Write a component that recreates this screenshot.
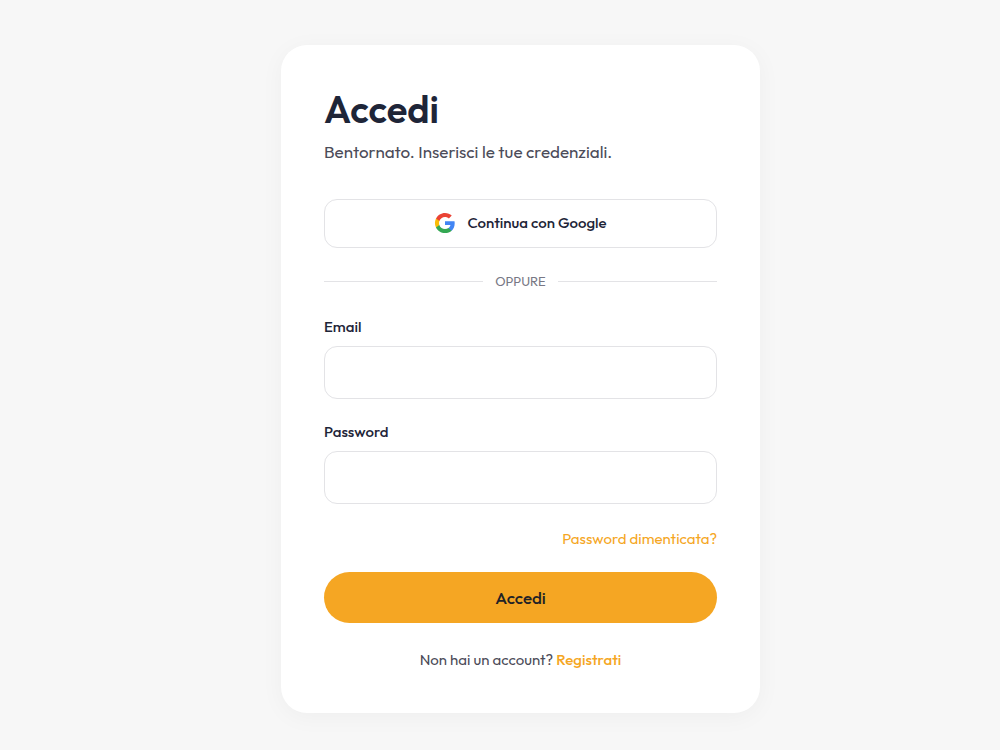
<main>
  <section class="card">
    <header>
      <h1>Accedi</h1>
      <p>Bentornato. Inserisci le tue credenziali.</p>
    </header>

    <button class="google" type="button">
      <svg viewBox="0 0 24 24" width="22" height="22" aria-hidden="true">
        <path fill="#4285F4" d="M22.56 12.25c0-.78-.07-1.53-.2-2.25H12v4.26h5.92c-.26 1.37-1.04 2.53-2.21 3.31v2.77h3.57c2.08-1.92 3.28-4.74 3.28-8.09z" />
        <path fill="#34A853" d="M12 23c2.97 0 5.46-.98 7.28-2.66l-3.57-2.77c-.98.66-2.23 1.06-3.71 1.06-2.86 0-5.29-1.93-6.16-4.53H2.18v2.84C3.99 20.53 7.7 23 12 23z" />
        <path fill="#FBBC05" d="M5.84 14.09c-.22-.66-.35-1.36-.35-2.09s.13-1.43.35-2.09V7.07H2.18C1.43 8.55 1 10.22 1 12s.43 3.45 1.18 4.93l3.66-2.84z" />
        <path fill="#EA4335" d="M12 5.38c1.62 0 3.06.56 4.21 1.64l3.15-3.15C17.45 2.09 14.97 1 12 1 7.7 1 3.99 3.47 2.18 7.07l3.66 2.84c.87-2.6 3.3-4.53 6.16-4.53z" />
      </svg>
      Continua con Google
    </button>

    <div class="divider"><span>OPPURE</span></div>

    <form onsubmit={(event) => event.preventDefault()}>
      <div class="field">
        <label for="email">Email</label>
        <input id="email" type="email" autocomplete="email" />
      </div>
      <div class="field">
        <label for="password">Password</label>
        <input id="password" type="password" autocomplete="current-password" />
      </div>
      <a class="forgot" href="#recupero">Password dimenticata?</a>
      <button class="submit" type="submit">Accedi</button>
    </form>

    <p class="signup">Non hai un account? <a href="#registrati">Registrati</a></p>
  </section>
</main>

<style>
  :global(body) {
    margin: 0;
    background: #f7f7f7;
  }

  main {
    box-sizing: border-box;
    display: flex;
    justify-content: center;
    min-height: 100vh;
    padding: 45px 20px 36px 61px;
    color: #1e2538;
    font-family: Outfit, Lato, sans-serif;
    font-size: 15px;
    line-height: 20px;
  }

  .card {
    box-sizing: border-box;
    align-self: flex-start;
    width: 100%;
    max-width: 479px;
    padding: 42px 43px 43px;
    border-radius: 26px;
    background: #fff;
    box-shadow: 0 4px 24px rgba(0, 0, 0, 0.04);
  }

  h1 {
    margin: 0 0 8px;
    font-size: 38px;
    font-weight: 600;
    line-height: 44px;
  }

  header p {
    margin: 0 0 34px;
    color: #4c4c59;
    font-size: 17px;
    font-weight: 400;
    line-height: 26px;
  }

  button,
  input {
    box-sizing: border-box;
    width: 100%;
    font-family: inherit;
    color: inherit;
  }

  .google {
    display: flex;
    align-items: center;
    justify-content: center;
    gap: 11px;
    height: 49px;
    padding: 0 16px 2px;
    border: 1px solid #e3e3e6;
    border-radius: 13px;
    background: #fff;
    font-size: 15px;
    font-weight: 500;
  }

  .divider {
    display: flex;
    align-items: center;
    gap: 12px;
    margin: 23px 0 26px;
    color: #787885;
    font-size: 13px;
  }

  .divider::before,
  .divider::after {
    content: '';
    flex: 1;
    height: 1px;
    background: #e3e3e6;
  }

  .field {
    margin-bottom: 23px;
  }

  label {
    display: block;
    margin-bottom: 9px;
    font-weight: 500;
  }

  input {
    display: block;
    height: 53px;
    padding: 0 16px;
    border: 1px solid #e3e3e6;
    border-radius: 13px;
    background: #fff;
    font-size: 16px;
  }

  a {
    color: #f5a623;
    text-decoration: none;
  }

  .forgot {
    display: block;
    width: fit-content;
    margin: 25px 0 23px auto;
  }

  .submit {
    height: 51px;
    border: 0;
    border-radius: 26px;
    background: #f5a623;
    color: #222226;
    font-size: 17px;
    font-weight: 500;
  }

  .signup {
    margin: 27px 0 0;
    color: #4c4c59;
    text-align: center;
  }

  .signup a {
    font-weight: 500;
  }
</style>
